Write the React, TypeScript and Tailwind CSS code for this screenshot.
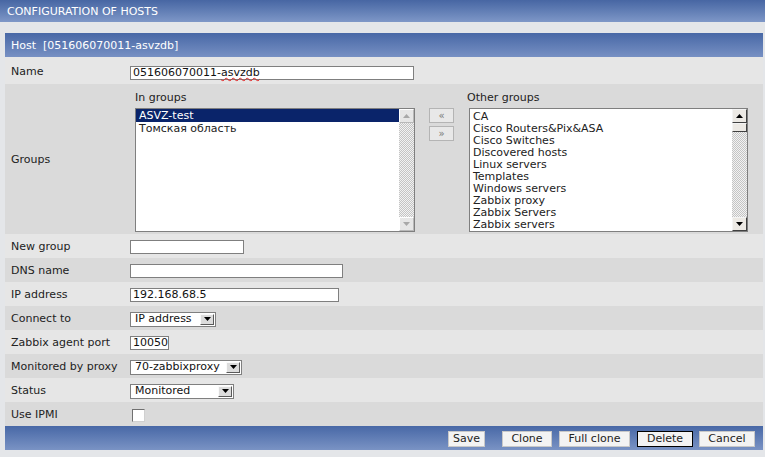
import React from "react";

function Tri({ up, color }: { up?: boolean; color: string }) {
  return (
    <svg width="7" height="4" viewBox="0 0 7 4" className="block">
      {up ? <polygon points="0,4 7,4 3.5,0" fill={color} /> : <polygon points="0,0 7,0 3.5,4" fill={color} />}
    </svg>
  );
}

function SBtn({ up, active }: { up?: boolean; active?: boolean }) {
  return active ? (
    <div className="flex h-[14px] w-[15px] items-center justify-center border border-t-[#f4f4f4] border-l-[#f4f4f4] border-b-[#404040] border-r-[#404040] bg-[#ece9e4]">
      <Tri up={up} color="#000" />
    </div>
  ) : (
    <div className="flex h-[14px] w-[15px] items-center justify-center border border-t-[#ffffff] border-l-[#ffffff] border-b-[#b8b8b8] border-r-[#b8b8b8] bg-[#e6e6e6]">
      <Tri up={up} color="#a8a8a8" />
    </div>
  );
}

function Scrollbar({ active }: { active?: boolean }) {
  return (
    <div className="flex w-[15px] flex-col">
      <SBtn up active={active} />
      <div className="flex-1 bg-[repeating-conic-gradient(#c4c4c4_0%_25%,#f2f2f2_0%_50%)] bg-[length:2px_2px]">
        {active && (
          <div className="h-[9px] w-[15px] border border-t-[#f4f4f4] border-l-[#f4f4f4] border-b-[#404040] border-r-[#404040] bg-[#ece9e4]" />
        )}
      </div>
      <SBtn active={active} />
    </div>
  );
}

function Input({ w, children }: { w: string; children?: React.ReactNode }) {
  return (
    <div className={`h-[14px] ${w} border border-[#7f7f7f] bg-white px-[2px] text-[11px] leading-[12px] text-[#111] whitespace-pre`}>
      {children}
    </div>
  );
}

function Select({ w, text }: { w: string; text: string }) {
  return (
    <div className={`flex h-[15px] ${w} items-center border border-[#7f7f7f] bg-white`}>
      <div className="flex-1 pl-[4px] text-[11px] leading-[12px] text-[#111]">{text}</div>
      <div className="mr-[1px] flex h-[11px] w-[14px] items-center justify-center border border-t-[#fafafa] border-l-[#fafafa] border-b-[#5a5a5a] border-r-[#5a5a5a] bg-[#dcdcdc]">
        <Tri color="#000" />
      </div>
    </div>
  );
}

function Row({ label, light, children }: { label: string; light?: boolean; children?: React.ReactNode }) {
  return (
    <div className={`flex h-[24px] items-center pt-[2px] ${light ? "bg-[#e6e6e6]" : "bg-[#dadada]"}`}>
      <div className="w-[125px] pl-[6px] text-[11px] text-[#222]">{label}</div>
      <div className="flex flex-1 items-center">{children}</div>
    </div>
  );
}

function FBtn({ children, w, focus }: { children: React.ReactNode; w: string; focus?: boolean }) {
  return (
    <div
      className={`flex h-[16px] ${w} items-center justify-center pt-[1px] ${focus ? "border border-black" : "border border-[#c8c8c8]"} bg-[#f3f3f3] text-[11px] leading-[12px] text-[#222]`}
    >
      {children}
    </div>
  );
}

export default function App() {
  const other = [
    "CA",
    "Cisco Routers&Pix&ASA",
    "Cisco Switches",
    "Discovered hosts",
    "Linux servers",
    "Templates",
    "Windows servers",
    "Zabbix proxy",
    "Zabbix Servers",
    "Zabbix servers",
  ];
  return (
    <div className="h-[457px] w-[765px] overflow-hidden bg-[#e4e6e9] font-['DejaVu_Sans',sans-serif]">
      <div className="flex h-[22px] items-center bg-gradient-to-b from-[#4766a3] to-[#7e97c7] pl-[7px] pt-[2px] text-[11px] text-white">
        CONFIGURATION OF HOSTS
      </div>
      <div className="h-[11px]" />
      <div className="ml-[5px] w-[758px]">
        <div className="flex h-[24px] items-center bg-gradient-to-b from-[#4868a6] to-[#7790c3] pl-[6px] pt-[2px] text-[11px] text-white whitespace-pre">
          Host  [051606070011-asvzdb]
        </div>
        <div className="flex h-[27px] items-center bg-[#e6e6e6] pt-[4px]">
          <div className="w-[125px] pl-[6px] text-[11px] text-[#222]">Name</div>
          <Input w="w-[284px]">
            051606070011-<span className="underline decoration-wavy decoration-[#e02020] decoration-1 underline-offset-1">asvzdb</span>
          </Input>
        </div>
        <div className="flex h-[150px] items-center bg-[#dadada] pt-[2px]">
          <div className="w-[125px] pl-[6px] text-[11px] text-[#222]">Groups</div>
          <div className="flex h-full items-start pt-[6px] pl-[5px]">
            <div className="flex flex-col">
              <div className="h-[12px] text-[11px] leading-[12px] text-[#222]">In groups</div>
              <div className="mt-[4px] flex h-[124px] w-[280px] border border-[#7f7f7f] bg-white">
                <div className="flex-1 text-[11px] leading-[12px] text-[#222]">
                  <div className="h-[13px] bg-[#0a246a] px-[3px] pt-[1px] leading-[12px] text-white">ASVZ-test</div>
                  <div className="h-[12px] px-[3px] pt-[1px]">Томская область</div>
                </div>
                <Scrollbar />
              </div>
            </div>
            <div className="ml-[14px] mt-[16px] flex flex-col gap-[3px]">
              <div className="flex h-[15px] w-[25px] items-center justify-center border border-[#b4b4b4] bg-[#e8e8e8] text-[10px] leading-[10px] text-[#777]">«</div>
              <div className="flex h-[15px] w-[25px] items-center justify-center border border-[#b4b4b4] bg-[#e8e8e8] text-[10px] leading-[10px] text-[#777]">»</div>
            </div>
            <div className="ml-[13px] flex flex-col">
              <div className="h-[12px] text-[11px] leading-[12px] text-[#222]">Other groups</div>
              <div className="ml-[2px] mt-[4px] flex h-[124px] w-[279px] border border-[#7f7f7f] bg-white">
                <div className="flex-1 pt-[1px] text-[11px] leading-[12px] text-[#222]">
                  {other.map((o) => (
                    <div key={o} className="h-[12px] px-[3px] pt-[1px] leading-[12px]">
                      {o}
                    </div>
                  ))}
                </div>
                <Scrollbar active />
              </div>
            </div>
          </div>
        </div>
        <Row label="New group" light>
          <Input w="w-[114px]" />
        </Row>
        <Row label="DNS name">
          <Input w="w-[213px]" />
        </Row>
        <Row label="IP address" light>
          <Input w="w-[209px]">192.168.68.5</Input>
        </Row>
        <Row label="Connect to">
          <Select w="w-[86px]" text="IP address" />
        </Row>
        <Row label="Zabbix agent port" light>
          <Input w="w-[39px]">10050</Input>
        </Row>
        <Row label="Monitored by proxy">
          <Select w="w-[112px]" text="70-zabbixproxy" />
        </Row>
        <Row label="Status" light>
          <Select w="w-[104px]" text="Monitored" />
        </Row>
        <Row label="Use IPMI">
          <div className="ml-[2px] h-[13px] w-[13px] border border-t-[#707070] border-l-[#707070] border-b-[#d0d0d0] border-r-[#d0d0d0] bg-white" />
        </Row>
        <div className="flex h-[24px] items-center justify-end bg-gradient-to-b from-[#4868a6] to-[#7a93c4] pr-[8px] pt-[1px]">
          <FBtn w="w-[37px]">Save</FBtn>
          <div className="w-[17px]" />
          <FBtn w="w-[50px]">Clone</FBtn>
          <div className="w-[7px]" />
          <FBtn w="w-[71px]">Full clone</FBtn>
          <div className="w-[7px]" />
          <FBtn w="w-[56px]" focus>
            Delete
          </FBtn>
          <div className="w-[6px]" />
          <FBtn w="w-[56px]">Cancel</FBtn>
        </div>
      </div>
    </div>
  );
}
